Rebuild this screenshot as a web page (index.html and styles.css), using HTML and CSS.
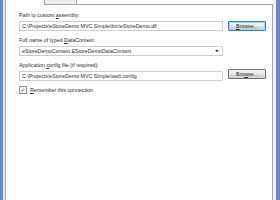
FILE: index.html
```html
<!DOCTYPE html>
<html>
  <head>
    <title>Connection</title>
    <link rel="stylesheet" href="styles.css">
  </head>
  <body>
    <div class="window">
      <div class="frame frame-left"></div>
      <div class="frame-inner"></div>
      <div class="tabs">
        <div class="tab-strip">
          <div class="tab tab-active"></div>
          <div class="tab"></div>
          <div class="tab-line"></div>
        </div>
        <div class="page">
          <label class="field-label">Path to custom <u>a</u>ssembly:</label>
          <div class="row">
            <div class="textbox">C:\Projects\eStoreDemo MVC Simple\bin\eStoreDemo.dll</div>
            <button class="btn btn-default"><u>B</u>rowse...</button>
          </div>

          <label class="field-label">Full name of typed <u>D</u>ataContext:</label>
          <div class="row">
            <div class="textbox combo">
              <span>eStoreDemoContext.EStoreDemoDataContext</span>
              <span class="arrow"></span>
            </div>
          </div>

          <label class="field-label">Application <u>c</u>onfig file (if required):</label>
          <div class="row">
            <div class="textbox">C:\Projects\eStoreDemo MVC Simple\web.config</div>
            <button class="btn btn-up">Bro<u>w</u>se...</button>
          </div>

          <div class="check-row">
            <span class="checkbox">&#10003;</span>
            <span><u>R</u>emember this connection</span>
          </div>
        </div>
      </div>
      <div class="frame-inner frame-inner-right"></div>
      <div class="frame frame-right"></div>
    </div>
  </body>
</html>
```

FILE: styles.css
```css
body {
  margin: 0;
  background-color: #ffffff;
  font-family: Tahoma, "Liberation Sans", "DejaVu Sans", sans-serif;
  font-size: 5.3px;
  color: #2a2a2a;
}
.window {
  display: flex;
  height: 200px;
}
.frame {
  width: 3px;
  background-color: #6489c4;
}
.frame-right {
  width: 4px;
}
.frame-inner {
  width: 2px;
  background-color: #e6e9ee;
}
.frame-inner-right {
  width: 3px;
  background-color: #f2f2f2;
}
.tabs {
  flex: 1;
  display: flex;
  flex-direction: column;
}
.tab-strip {
  height: 5px;
  display: flex;
}
.tab {
  width: 33px;
  height: 5px;
  box-sizing: border-box;
  border: 1px solid #a5a5a5;
  border-top: none;
  background-color: #ececec;
}
.tab-active {
  width: 39px;
  border: none;
  border-left: 1px solid #a5a5a5;
  background-color: #ffffff;
}
.tab-line {
  flex: 1;
  border-bottom: 1px solid #a5a5a5;
}
.page {
  flex: 1;
  border-left: 1px solid #a5a5a5;
  border-right: 1px solid #a5a5a5;
  padding: 7px 6px 0 13px;
  display: flex;
  flex-direction: column;
}
.field-label {
  display: block;
  line-height: 7px;
  margin-bottom: 2px;
}
.row {
  display: flex;
  align-items: center;
  gap: 5px;
  margin-bottom: 6px;
  height: 10px;
}
.textbox {
  width: 204px;
  height: 10px;
  box-sizing: border-box;
  border: 1px solid #c9ccd2;
  padding: 0 2px;
  line-height: 8px;
  white-space: nowrap;
  overflow: hidden;
}
.combo {
  display: flex;
  justify-content: space-between;
  align-items: center;
}
.arrow {
  width: 0;
  height: 0;
  border-left: 2px solid transparent;
  border-right: 2px solid transparent;
  border-top: 2px solid #222222;
  margin-right: 1px;
}
.btn {
  width: 38px;
  height: 10px;
  padding: 0;
  font: inherit;
  line-height: 8px;
  color: #2a2a2a;
  border: 1px solid #707070;
  border-radius: 1px;
  background: linear-gradient(#f2f2f2, #ebebeb 50%, #dddddd 51%, #cfcfcf);
}
.btn-default {
  border-color: #3c7fb1;
  box-shadow: inset 0 0 0 1px #9fd5f3;
}
.btn-up {
  margin-top: -4px;
}
.check-row {
  display: flex;
  align-items: center;
  gap: 3px;
  margin-top: -1px;
}
.checkbox {
  width: 6px;
  height: 6px;
  border: 1px solid #8f8f8f;
  background-color: #f4f4f4;
  font-size: 6px;
  line-height: 6px;
  text-align: center;
  color: #3a5aa0;
}
u {
  text-decoration: underline;
}
```
